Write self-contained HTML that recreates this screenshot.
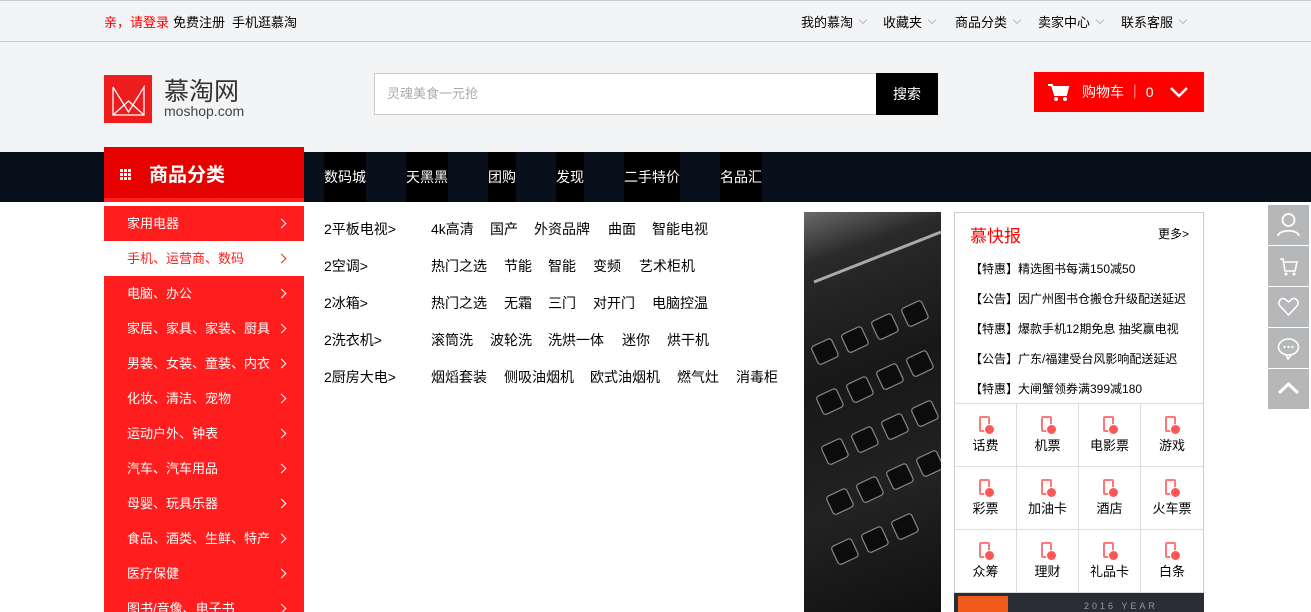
<!DOCTYPE html>
<html><head><meta charset="utf-8"><style>
*{margin:0;padding:0;box-sizing:border-box}
html,body{width:1311px;height:612px;overflow:hidden}
body{background:#fff;font-family:"Liberation Sans","Noto Sans CJK SC",sans-serif;font-size:13px;color:#000;position:relative}
.a{position:absolute;white-space:nowrap}
.top{position:absolute;left:0;top:0;width:1311px;height:152px;background:#f3f4f6;border-top:1px solid #ccc}
.line{position:absolute;left:0;top:41px;width:1311px;height:1px;background:#ccc}
.chev{display:inline-block;width:6px;height:6px;border-right:1px solid #bbb;border-bottom:1px solid #bbb;transform:rotate(45deg);margin-left:7px;position:relative;top:-4px}
.nav{position:absolute;left:0;top:152px;width:1311px;height:50px;background:#08111b}
.ni{position:absolute;top:152px;height:50px;background:#000;color:#fff;font-size:14px;line-height:50px;white-space:nowrap}
.cat{position:absolute;left:104px;width:200px;height:35px;line-height:35px;color:#fff;background:#ff1d1d;padding-left:23px;font-size:13px;white-space:nowrap}
.cat::after{content:"";position:absolute;right:19px;top:14px;width:6px;height:6px;border-right:1px solid #fff;border-top:1px solid #fff;transform:rotate(45deg)}
.cat.w{background:#fff;color:#ff1d1d}
.cat.w::after{border-color:#ff1d1d}
.sub{position:absolute;left:324px;font-size:14px;white-space:nowrap;width:470px;height:20px}
.sub span{position:absolute;top:0;white-space:nowrap}
.ic{position:absolute;width:62px;height:63px;border-right:1px solid #ddd;border-bottom:1px solid #ddd;text-align:center;font-size:13px}
.ph{position:absolute;left:24px;top:12px;width:11px;height:16px;border:2px solid #f77;border-radius:2px}
.ph::after{content:"";position:absolute;right:-7px;bottom:-5px;width:9px;height:9px;border-radius:50%;background:#f55;border:1px solid #fff}
.sb{position:absolute;left:1268px;width:41px;height:40px;background:#b6b7b9}
</style></head><body>
<div class="top"></div><div class="line"></div>
<div class="a" style="left:104px;top:12px;color:#f00">亲，请登录</div>
<div class="a" style="left:173px;top:12px">免费注册</div>
<div class="a" style="left:232px;top:12px">手机逛慕淘</div>
<div class="a" style="left:801px;top:12px">我的慕淘<i class="chev"></i></div>
<div class="a" style="left:883px;top:12px">收藏夹<i class="chev"></i></div>
<div class="a" style="left:955px;top:12px">商品分类<i class="chev"></i></div>
<div class="a" style="left:1038px;top:12px">卖家中心<i class="chev"></i></div>
<div class="a" style="left:1121px;top:12px">联系客服<i class="chev"></i></div>
<div class="a" style="left:104px;top:75px;width:48px;height:48px;background:#ee1c1c">
<svg width="48" height="48"><path d="M9 12V40H40V12L24.5 37L9 12M9 40L24.5 26L40 40" stroke="#fff" stroke-width="1.3" fill="none"/></svg></div>
<div class="a" style="left:164px;top:78px;font-size:25px;color:#333;line-height:28px">慕淘网</div>
<div class="a" style="left:164px;top:103px;font-size:14px;color:#444">moshop.com</div>
<div class="a" style="left:374px;top:73px;width:503px;height:42px;background:#fff;border:1px solid #ccc;color:#aaa;line-height:40px;padding-left:12px">灵魂美食一元抢</div>
<div class="a" style="left:876px;top:73px;width:62px;height:42px;background:#000;color:#fff;text-align:center;line-height:42px;font-size:14px">搜索</div>
<div class="a" style="left:1034px;top:72px;width:170px;height:40px;background:#f00;color:#fff;font-size:14px;line-height:40px">
<svg style="position:absolute;left:14px;top:11px" width="22" height="18"><path d="M0 2H4L7 12H18L20 4H5" fill="#fff" stroke="#fff" stroke-width="2"/><circle cx="8" cy="16" r="2" fill="#fff"/><circle cx="17" cy="16" r="2" fill="#fff"/></svg>
<span style="position:absolute;left:48px">购物车 ｜ 0</span>
<svg style="position:absolute;left:136px;top:14px" width="18" height="12"><path d="M1 2L9 10L17 2" stroke="#fff" stroke-width="2.5" fill="none"/></svg></div>
<div class="nav"></div>
<div class="ni" style="left:324px;width:42px">数码城</div>
<div class="ni" style="left:406px;width:42px">天黑黑</div>
<div class="ni" style="left:488px;width:28px">团购</div>
<div class="ni" style="left:556px;width:28px">发现</div>
<div class="ni" style="left:624px;width:56px">二手特价</div>
<div class="ni" style="left:720px;width:42px">名品汇</div>
<div class="a" style="left:104px;top:147px;width:200px;height:55px;background:#e60000;border-bottom:4px solid #ff1d1d;color:#fff;font-size:19px;font-weight:bold;line-height:58px;padding-left:45px">商品分类
<svg style="position:absolute;left:16px;top:22px" width="12" height="12"><g fill="#fff"><rect x="0" y="0" width="3" height="3"/><rect x="4" y="0" width="3" height="3"/><rect x="8" y="0" width="3" height="3"/><rect x="0" y="4" width="3" height="3"/><rect x="4" y="4" width="3" height="3"/><rect x="8" y="4" width="3" height="3"/><rect x="0" y="8" width="3" height="3"/><rect x="4" y="8" width="3" height="3"/><rect x="8" y="8" width="3" height="3"/></g></svg></div>
<div class="cat" style="top:206px">家用电器</div>
<div class="cat w" style="top:241px">手机、运营商、数码</div>
<div class="cat" style="top:276px">电脑、办公</div>
<div class="cat" style="top:311px">家居、家具、家装、厨具</div>
<div class="cat" style="top:346px">男装、女装、童装、内衣</div>
<div class="cat" style="top:381px">化妆、清洁、宠物</div>
<div class="cat" style="top:416px">运动户外、钟表</div>
<div class="cat" style="top:451px">汽车、汽车用品</div>
<div class="cat" style="top:486px">母婴、玩具乐器</div>
<div class="cat" style="top:521px">食品、酒类、生鲜、特产</div>
<div class="cat" style="top:556px">医疗保健</div>
<div class="cat" style="top:591px">图书/音像、电子书</div>
<div class="sub" style="top:219px">2平板电视&gt;<span style="left:107px">4k高清</span><span style="left:166px">国产</span><span style="left:210px">外资品牌</span><span style="left:284px">曲面</span><span style="left:328px">智能电视</span></div>
<div class="sub" style="top:256px">2空调&gt;<span style="left:107px">热门之选</span><span style="left:180px">节能</span><span style="left:224px">智能</span><span style="left:269px">变频</span><span style="left:315px">艺术柜机</span></div>
<div class="sub" style="top:293px">2冰箱&gt;<span style="left:107px">热门之选</span><span style="left:180px">无霜</span><span style="left:224px">三门</span><span style="left:269px">对开门</span><span style="left:328px">电脑控温</span></div>
<div class="sub" style="top:330px">2洗衣机&gt;<span style="left:107px">滚筒洗</span><span style="left:166px">波轮洗</span><span style="left:224px">洗烘一体</span><span style="left:298px">迷你</span><span style="left:343px">烘干机</span></div>
<div class="sub" style="top:367px">2厨房大电&gt;<span style="left:107px">烟熖套装</span><span style="left:180px">侧吸油烟机</span><span style="left:266px">欧式油烟机</span><span style="left:353px">燃气灶</span><span style="left:412px">消毒柜</span></div>
<div class="a" style="left:804px;top:212px;width:137px;height:400px;background:linear-gradient(160deg,#6a6a6a 0%,#2a2a2a 12%,#181818 40%,#222 70%,#101010 100%)">
<svg width="137" height="400"><g fill="#0c0c0c" stroke="#888" stroke-width="1.2"><rect x="10" y="130" width="22" height="20" rx="3" transform="rotate(-25 20 140)"/><rect x="40" y="118" width="22" height="20" rx="3" transform="rotate(-25 50 128)"/><rect x="70" y="105" width="22" height="20" rx="3" transform="rotate(-25 80 115)"/><rect x="100" y="92" width="22" height="20" rx="3" transform="rotate(-25 110 102)"/><rect x="15" y="180" width="22" height="20" rx="3" transform="rotate(-25 25 190)"/><rect x="45" y="168" width="22" height="20" rx="3" transform="rotate(-25 55 178)"/><rect x="75" y="155" width="22" height="20" rx="3" transform="rotate(-25 85 165)"/><rect x="105" y="142" width="22" height="20" rx="3" transform="rotate(-25 115 152)"/><rect x="20" y="230" width="22" height="20" rx="3" transform="rotate(-25 30 240)"/><rect x="50" y="218" width="22" height="20" rx="3" transform="rotate(-25 60 228)"/><rect x="80" y="205" width="22" height="20" rx="3" transform="rotate(-25 90 215)"/><rect x="110" y="192" width="22" height="20" rx="3" transform="rotate(-25 120 202)"/><rect x="25" y="280" width="22" height="20" rx="3" transform="rotate(-25 35 290)"/><rect x="55" y="268" width="22" height="20" rx="3" transform="rotate(-25 65 278)"/><rect x="85" y="255" width="22" height="20" rx="3" transform="rotate(-25 95 265)"/><rect x="115" y="242" width="22" height="20" rx="3" transform="rotate(-25 125 252)"/><rect x="30" y="330" width="22" height="20" rx="3" transform="rotate(-25 40 340)"/><rect x="60" y="318" width="22" height="20" rx="3" transform="rotate(-25 70 328)"/><rect x="90" y="305" width="22" height="20" rx="3" transform="rotate(-25 100 315)"/></g><path d="M10 70L137 20" stroke="#aaa" stroke-width="3"/></svg></div>
<div class="a" style="left:954px;top:212px;width:250px;height:400px;border:1px solid #ccc;border-bottom:none"></div>
<div class="a" style="left:970px;top:222px;color:#f00;font-size:17px">慕快报</div>
<div class="a" style="left:1158px;top:225px;font-size:12px">更多&gt;</div>
<div class="a" style="left:970px;top:260px;font-size:12px">【特惠】精选图书每满150减50</div>
<div class="a" style="left:970px;top:290px;font-size:12px">【公告】因广州图书仓搬仓升级配送延迟</div>
<div class="a" style="left:970px;top:320px;font-size:12px">【特惠】爆款手机12期免息 抽奖赢电视</div>
<div class="a" style="left:970px;top:350px;font-size:12px">【公告】广东/福建受台风影响配送延迟</div>
<div class="a" style="left:970px;top:380px;font-size:12px">【特惠】大闸蟹领券满399减180</div>
<div class="a" style="left:955px;top:403px;width:248px;height:1px;background:#ddd"></div>
<div class="ic" style="left:955px;top:404px"><i class="ph"></i><div style="padding-top:31px">话费</div></div>
<div class="ic" style="left:1017px;top:404px"><i class="ph"></i><div style="padding-top:31px">机票</div></div>
<div class="ic" style="left:1079px;top:404px"><i class="ph"></i><div style="padding-top:31px">电影票</div></div>
<div class="ic" style="left:1141px;top:404px;border-right:none"><i class="ph"></i><div style="padding-top:31px">游戏</div></div>
<div class="ic" style="left:955px;top:467px"><i class="ph"></i><div style="padding-top:31px">彩票</div></div>
<div class="ic" style="left:1017px;top:467px"><i class="ph"></i><div style="padding-top:31px">加油卡</div></div>
<div class="ic" style="left:1079px;top:467px"><i class="ph"></i><div style="padding-top:31px">酒店</div></div>
<div class="ic" style="left:1141px;top:467px;border-right:none"><i class="ph"></i><div style="padding-top:31px">火车票</div></div>
<div class="ic" style="left:955px;top:530px"><i class="ph"></i><div style="padding-top:31px">众筹</div></div>
<div class="ic" style="left:1017px;top:530px"><i class="ph"></i><div style="padding-top:31px">理财</div></div>
<div class="ic" style="left:1079px;top:530px"><i class="ph"></i><div style="padding-top:31px">礼品卡</div></div>
<div class="ic" style="left:1141px;top:530px;border-right:none"><i class="ph"></i><div style="padding-top:31px">白条</div></div>
<div class="a" style="left:954px;top:593px;width:250px;height:19px;background:#2a2d33"><div style="position:absolute;left:4px;top:3px;width:50px;height:16px;background:#f05a1a"></div><div style="position:absolute;left:130px;top:8px;color:#999;font-size:9px;letter-spacing:3px">2016 YEAR</div></div>
<div class="sb" style="top:205px"><svg width="41" height="40"><circle cx="20.5" cy="15" r="6" fill="none" stroke="#fff" stroke-width="1.8"/><path d="M10 31C11 24 30 24 31 31" fill="none" stroke="#fff" stroke-width="1.8"/></svg></div>
<div class="sb" style="top:246px"><svg width="41" height="40"><path d="M12 13H15L17 25H27L29 16H16" fill="none" stroke="#fff" stroke-width="1.6"/><circle cx="18" cy="28" r="1.5" fill="#fff"/><circle cx="26" cy="28" r="1.5" fill="#fff"/></svg></div>
<div class="sb" style="top:287px"><svg width="41" height="40"><path d="M20.5 28L12 19C9 15 13 10 17 12L20.5 15L24 12C28 10 32 15 29 19Z" fill="none" stroke="#fff" stroke-width="1.6"/></svg></div>
<div class="sb" style="top:328px"><svg width="41" height="40"><ellipse cx="20.5" cy="19" rx="10" ry="8" fill="none" stroke="#fff" stroke-width="1.6"/><path d="M18 27L20 31L23 27" fill="none" stroke="#fff" stroke-width="1.6"/><circle cx="16.5" cy="19" r="1.2" fill="#fff"/><circle cx="20.5" cy="19" r="1.2" fill="#fff"/><circle cx="24.5" cy="19" r="1.2" fill="#fff"/></svg></div>
<div class="sb" style="top:369px"><svg width="41" height="40"><path d="M11 24L20.5 15L30 24" fill="none" stroke="#fff" stroke-width="3"/></svg></div>
</body></html>
